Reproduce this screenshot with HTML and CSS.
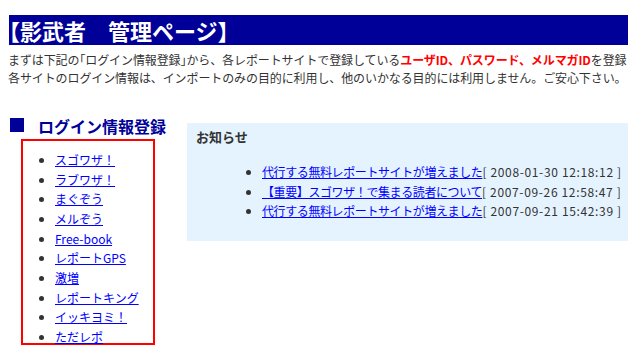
FILE: index.html
```html
<!DOCTYPE html>
<html>
<head>
	<meta charset="utf-8">
	<title>影武者 管理ページ</title>
	<link rel="stylesheet" href="styles.css">
</head>
<body>
	<div class="wrap">
		<h1 class="pageTitle">【影武者　管理ページ】</h1>
		<p class="intro">
			まずは下記の<span class="kakko">「ログイン情報登録」</span>から、各レポートサイトで登録している<strong>ユーザID、パスワード、メルマガID</strong>を登録して下さい。<br>
			各サイトのログイン情報は、インポートのみの目的に利用し、他のいかなる目的には利用しません。ご安心下さい。
		</p>
		<div class="columns">
			<div class="side">
				<h2 class="sideTitle"><span class="mark"></span>ログイン情報登録</h2>
				<ul class="siteList">
					<li><a href="#">スゴワザ！</a></li>
					<li><a href="#">ラブワザ！</a></li>
					<li><a href="#">まぐぞう</a></li>
					<li><a href="#">メルぞう</a></li>
					<li><a href="#">Free-book</a></li>
					<li><a href="#">レポートGPS</a></li>
					<li><a href="#">激増</a></li>
					<li><a href="#">レポートキング</a></li>
					<li><a href="#">イッキヨミ！</a></li>
					<li><a href="#">ただレポ</a></li>
				</ul>
			</div>
			<div class="news">
				<h3 class="newsTitle">お知らせ</h3>
				<ul class="newsList">
					<li><a href="#">代行する無料レポートサイトが増えました</a><span class="date">[ 2008-01-30 12:18:12 ]</span></li>
					<li><a href="#">【重要】スゴワザ！で集まる読者について</a><span class="date">[ 2007-09-26 12:58:47 ]</span></li>
					<li><a href="#">代行する無料レポートサイトが増えました</a><span class="date">[ 2007-09-21 15:42:39 ]</span></li>
				</ul>
			</div>
		</div>
	</div>
</body>
</html>
```

FILE: styles.css
```css
html, body {
	margin: 0;
	padding: 0;
	background: #fff;
	overflow: hidden;
}
body {
	font-family: "Noto Sans CJK JP", "DejaVu Sans", sans-serif;
	font-size: 12px;
	color: #333;
}
.wrap {
	width: 960px;
	padding: 15px 0 0 9px;
}

.pageTitle {
	margin: 0;
	height: 30px;
	line-height: 30px;
	background: #000099;
	color: #fff;
	font-size: 22px;
	font-weight: bold;
	font-feature-settings: "halt";
	white-space: nowrap;
}

.intro {
	margin: 6px 0 0 -1px;
	line-height: 18px;
	letter-spacing: -0.1px;
	white-space: nowrap;
}
.intro .kakko {
	font-feature-settings: "halt";
}
.intro strong {
	color: #ff0000;
}

.columns {
	display: flex;
	align-items: flex-start;
	margin-top: 29px;
}
.side {
	width: 177px;
	padding-left: 1px;
}
.sideTitle {
	margin: 0 0 3px 0;
	height: 20px;
	display: flex;
	align-items: center;
	color: #000099;
	font-size: 16px;
	font-weight: bold;
}
.mark {
	width: 14px;
	height: 14px;
	background: #000099;
	margin: 0 14px 3px 0;
}
.siteList {
	margin: 0 0 0 11px;
	width: 98px;
	height: 193px;
	border: 2px solid #ff0000;
	padding: 9px 0 0 32px;
	list-style: disc;
}
.siteList li {
	line-height: 19.67px;
}

a {
	color: #0000ff;
}

.news {
	flex: 1;
	margin-top: 7px;
	background: #e5f3ff;
	padding: 4px 10px 20px 9px;
}
.newsTitle {
	margin: 0;
	line-height: 20px;
	font-size: 13px;
	font-weight: bold;
}
.newsList {
	margin: 15px 0 0 0;
	padding-left: 66px;
}
.newsList li {
	line-height: 19.5px;
	white-space: nowrap;
}
.newsList a {
	letter-spacing: -0.4px;
}
.date {
	color: #333;
	letter-spacing: 0.65px;
}
```
